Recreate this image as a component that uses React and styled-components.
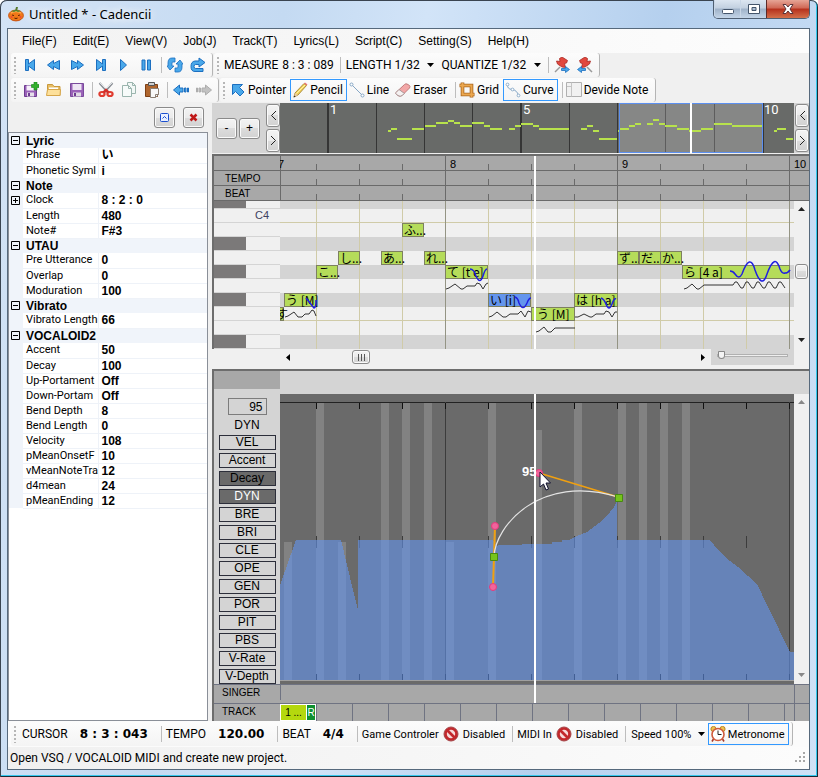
import styled, { createGlobalStyle, css } from "styled-components";
import { useState } from "react";

const menus = ["File(F)", "Edit(E)", "View(V)", "Job(J)", "Track(T)", "Lyrics(L)", "Script(C)", "Setting(S)", "Help(H)"];

const properties = [
  { name: "Lyric", items: [["Phrase", "い"], ["Phonetic Syml", "i"]] },
  { name: "Note", items: [["Clock", "8 : 2 : 0", true], ["Length", "480"], ["Note#", "F#3"]] },
  { name: "UTAU", items: [["Pre Utterance", "0"], ["Overlap", "0"], ["Moduration", "100"]] },
  { name: "Vibrato", items: [["Vibrato Length", "66"]] },
  {
    name: "VOCALOID2",
    items: [
      ["Accent", "50"],
      ["Decay", "100"],
      ["Up-Portament", "Off"],
      ["Down-Portam", "Off"],
      ["Bend Depth", "8"],
      ["Bend Length", "0"],
      ["Velocity", "108"],
      ["pMeanOnsetF", "10"],
      ["vMeanNoteTra", "12"],
      ["d4mean", "24"],
      ["pMeanEnding", "12"],
    ],
  },
];

const params = ["VEL", "Accent", "Decay", "DYN", "BRE", "BRI", "CLE", "OPE", "GEN", "POR", "PIT", "PBS", "V-Rate", "V-Depth"];

// x, y, width
const notes = [
  { x: -6, y: 106, w: 10, text: "す" },
  { x: 4, y: 92, w: 33, text: "う [M]" },
  { x: 36, y: 64, w: 22, text: "こ..." },
  { x: 58, y: 50, w: 22, text: "し..." },
  { x: 101, y: 50, w: 22, text: "あ..." },
  { x: 122, y: 22, w: 22, text: "ふ..." },
  { x: 144, y: 50, w: 22, text: "れ..." },
  { x: 165, y: 64, w: 43, text: "て [t e]" },
  { x: 208, y: 92, w: 43, text: "い [i]", selected: true },
  { x: 251, y: 106, w: 4, text: "" },
  { x: 255, y: 106, w: 40, text: "う [M]" },
  { x: 294, y: 92, w: 44, text: "は [h a]" },
  { x: 337, y: 50, w: 22, text: "ず..." },
  { x: 359, y: 50, w: 22, text: "だ..." },
  { x: 380, y: 50, w: 22, text: "か..." },
  { x: 402, y: 64, w: 108, text: "ら [4 a]" },
];

const keyRows = ["half", "C4", "white", "black", "white", "black", "white", "black", "white", "white", "black"];

const beats = [36, 79, 122, 165, 208, 251, 294, 337, 380, 423, 466, 509];
const measures = [165, 337, 509];

const overviewNotes = [
  [108, 27, 3], [111, 25, 6], [117, 35, 15], [132, 25, 12], [145, 22, 11], [156, 19, 12], [168, 17, 6],
  [174, 19, 6], [180, 22, 12], [192, 19, 12], [204, 22, 6], [210, 25, 12], [229, 25, 6], [235, 22, 6],
  [241, 20, 12], [253, 22, 6], [259, 25, 30], [301, 25, 6], [307, 22, 6], [313, 27, 6], [319, 35, 18],
  [338, 27, 2], [340, 25, 9], [349, 22, 6], [355, 20, 6], [367, 20, 6], [373, 16, 6], [379, 20, 6],
  [385, 22, 12], [397, 25, 12], [409, 27, 12], [421, 25, 12], [434, 20, 18], [452, 22, 30],
  [494, 27, 3], [497, 25, 9], [506, 35, 7],
];

// x, top, width of each velocity bar
const bars = [
  [4, 148, 8], [36, 9, 8], [58, 148, 8], [101, 9, 8], [122, 9, 8], [144, 9, 8], [166, 148, 8], [208, 9, 8],
  [254, 36, 8], [294, 9, 8], [338, 9, 8], [359, 9, 8], [380, 9, 8], [402, 9, 8],
];

export default function App() {
  return (
    <WindowStyle>
      <GlobalStyle />
      <TitleBar />
      <ClientStyle>
        <MenuStyle>
          {menus.map((menu) => (
            <MenuItemStyle key={menu}>{menu}</MenuItemStyle>
          ))}
        </MenuStyle>
        <Toolbars />
        <MainStyle>
          <PropertyPanel />
          <EditorStyle>
            <Overview />
            <PianoRoll />
            <CurveEditor />
          </EditorStyle>
        </MainStyle>
        <BottomBar />
        <StatusStyle>
          <span>Open VSQ / VOCALOID MIDI and create new project.</span>
          <svg width="12" height="12" fill="#a8a8a8">
            <path d="M8 0h2v2H8zM4 4h2v2H4zM8 4h2v2H8zM0 8h2v2H0zM4 8h2v2H4zM8 8h2v2H8z" />
          </svg>
        </StatusStyle>
      </ClientStyle>
    </WindowStyle>
  );
}

function TitleBar() {
  return (
    <TitleBarStyle>
      <svg width="16" height="16" viewBox="0 0 16 16">
        <ellipse cx="8" cy="9.5" rx="7.4" ry="5.4" fill="#f07818" stroke="#c8500c" />
        <path d="M3 7q5-3 10 0" stroke="#ffa94a" fill="none" strokeWidth="1.5" />
        <path d="M7 5l1-4 2 0-1 4z" fill="#567a2c" />
        <path d="M3 5l5-1 5 1-3 1-2-1-2 1z" fill="#4a8a30" />
        <path d="M4 9l2 .6M12 9l-2 .6M6.500 12q1.500 1 3 0" stroke="#6b2306" />
        <circle cx="3.500" cy="11" r="1" fill="#f04838" />
        <circle cx="12.500" cy="11" r="1" fill="#f04838" />
      </svg>
      <TitleStyle>Untitled * - Cadencii</TitleStyle>
      <WindowButtonsStyle>
        <WindowButtonStyle aria-label="Minimize">
          <svg width="14" height="12">
            <rect x="1.500" y="6.500" width="11" height="4" rx="1" fill="#fff" stroke="#44556b" />
          </svg>
        </WindowButtonStyle>
        <WindowButtonStyle aria-label="Maximize">
          <svg width="14" height="12">
            <path d="M1.500 1.500h11v9h-11zM5 4.500h4v3H5z" fill="#fff" fillRule="evenodd" stroke="#44556b" />
          </svg>
        </WindowButtonStyle>
        <WindowButtonStyle aria-label="Close" $close>
          <svg width="14" height="12" viewBox="0 0 14 12">
            <path d="M2 1.500h3l2 2.500 2-2.500h3L9 6l3 4.500H9L7 8l-2 2.500H2L5 6z" fill="#fff" stroke="#5b3338" />
          </svg>
        </WindowButtonStyle>
      </WindowButtonsStyle>
    </TitleBarStyle>
  );
}

const blue = { fill: "#49a8ea", stroke: "#1c6fc0", strokeWidth: 1, strokeLinejoin: "round" };

const icons = {
  first: <path {...blue} d="M2.500 2.500h3v4.500l6-4.500v11l-6-4.500v4.500h-3z" />,
  rewind: <path {...blue} d="M1.500 8l6-4.500v3l6-3v9l-6-3v3z" />,
  forward: <path {...blue} d="M14.500 8l-6-4.500v3l-6-3v9l6-3v3z" />,
  last: <path {...blue} d="M13.500 2.500h-3v4.500l-6-4.500v11l6-4.500v4.500h3z" />,
  play: <path {...blue} d="M5.500 2.500l6 5.500-6 5.500z" />,
  pause: <path {...blue} d="M4 3h3v10H4zM9.500 3h3v10h-3z" />,
  loop: (
    <g {...blue} strokeWidth=".8">
      <path d="M8 1H5Q1 1 1 6v3H0l3 4 4-4H5V6q0-1 1-1h2z" />
      <path d="M8 15h3q4 0 4-5V7h1l-3-4-4 4h2v3q0 1-1 1H8z" />
    </g>
  ),
  redo: <path {...blue} d="M9 1l6 4.500L9 10V7.500H5.500Q4 7.500 4 9.500t1.500 2H13v3H5Q1 14.500 1 9.500T5 4h4z" />,
  newFile: (
    <>
      <path d="M1.500 3.500h12v11h-12z" fill="#9a62b8" stroke="#6e3b90" />
      <path d="M3.500 3.500h8v5h-8z" fill="#f7f0fb" />
      <path d="M4 10.500h7v4H4z" fill="#e6e0ea" />
      <path d="M5 11h2v3H5z" fill="#6e3b90" />
      <path d="M11 0h3v2.500h2v3h-2V8h-3V5.500H8.500v-3H11z" fill="#33b02c" stroke="#16801a" strokeWidth=".6" />
    </>
  ),
  open: (
    <>
      <path d="M1.500 13.500v-11h5l1.500 2h6v9z" fill="#e9bf66" stroke="#c9993c" />
      <path d="M3 5.500h9v4H3z" fill="#fff" />
      <path d="M.5 13.500l1-6h13l-.5 6z" fill="#fde09a" stroke="#d6a64a" />
    </>
  ),
  save: (
    <>
      <path d="M1.500 1.500h13v13h-13z" fill="#9a62b8" stroke="#7a4a9c" />
      <path d="M3.500 2h9v6h-9z" fill="#eee6f4" />
      <path d="M4 10.500h8v4H4z" fill="#e0dce4" />
      <path d="M5 11h2v3H5z" fill="#6e3b90" />
    </>
  ),
  cut: (
    <>
      <path d="M1.500 1l8 9M14.500 1l-8 9" stroke="#8c9096" strokeWidth="2" />
      <path d="M2 1l6 6M14 1L8 7" stroke="#dfe2e6" />
      <ellipse cx="4" cy="12" rx="2.600" ry="2" fill="none" stroke="#e03c30" strokeWidth="2.200" />
      <ellipse cx="12" cy="12" rx="2.600" ry="2" fill="none" stroke="#e03c30" strokeWidth="2.200" />
      <path d="M5.500 10.500L8 8l2.500 2.500" stroke="#d32f2a" strokeWidth="2.500" fill="none" />
    </>
  ),
  copy: (
    <>
      <path d="M6.500.5h5l3 3v8h-8z" fill="#f2f8f6" stroke="#9bb5ae" />
      <path d="M1.500 3.500h6l3 3v8h-9z" fill="#f7fbfa" stroke="#9bb5ae" />
      <path d="M7.500 3.500v3h3M11.500.5v3h3" fill="none" stroke="#9bb5ae" />
    </>
  ),
  paste: (
    <>
      <path d="M1.500 2.500h12v12h-12z" fill="#b0662e" stroke="#7d3f14" />
      <path d="M4.500.5h6v3h-6z" fill="#cfcfcf" stroke="#555" />
      <path d="M6.500 6.500h8v6l-3 3h-5z" fill="#f8f8f8" stroke="#8b7e74" />
      <path d="M11.500 15.500v-3h3" fill="none" stroke="#8b7e74" />
    </>
  ),
  undo: <path {...blue} d="M.5 8L6.500 3v3h3.500v4H6.500v3zM11.500 6h1.500v4h-1.500zM14.500 6h1v4h-1z" />,
  redoOff: <path fill="#c2c2c2" stroke="#adadad" d="M15.500 8L9.500 3v3H6v4h3.500v3zM3 6h1.500v4H3zM.5 6h1v4h-1z" />,
  pointer: <path {...blue} d="M2.500 2.500h10L9.500 5.500l4.500 4.500-4 4-4.500-4.500-3 3z" />,
  pencil: (
    <>
      <path d="M2 15l1-4L12 1.500l2.500 2L6 13z" fill="#f3d25a" stroke="#9b7a24" strokeWidth=".8" />
      <path d="M12 1.500l1-1 2.500 2-1 1z" fill="#e87474" />
      <path d="M2 15l1-4 3 2z" fill="#e8c9a0" />
      <path d="M1.500 15.500l.8-2 1.200 1z" fill="#222" />
      <path d="M4.500 11.500L13 3" stroke="#fff3a8" />
    </>
  ),
  line: (
    <>
      <path d="M2.500 2.500l11 11" stroke="#86a7c6" />
      <circle cx="2.500" cy="2.500" r="1.500" fill="#fff" stroke="#86a7c6" />
      <circle cx="13.500" cy="13.500" r="1.500" fill="#fff" stroke="#86a7c6" />
    </>
  ),
  eraser: (
    <>
      <path d="M1 10.500l8.500-8q1-1 2.500-.5l2.500 1.500q1 1 0 2.500L7 13.500q-1.500 1-3 .5l-2.500-1.500q-1-1-.5-2z" fill="#f2a7a7" stroke="#c07b7b" />
      <path d="M1 10.500l3-3 5.500 4L7 13.500q-1.500 1-3 .5l-2.500-1.500q-1-1-.5-2z" fill="#f5f1f1" stroke="#a99" />
    </>
  ),
  grid: (
    <>
      <path d="M.5 3.500h12v12M3.500.5v12h12" stroke="#a8651d" strokeWidth="3.600" fill="none" />
      <path d="M1 3.500h11.500V15M3.500 1v11.500H15" stroke="#eba74f" strokeWidth="2" fill="none" />
    </>
  ),
  curve: (
    <>
      <path d="M2.500 2.500Q2 7 7 7.500T13.500 13.500" stroke="#86a7c6" fill="none" />
      <g fill="#fff" stroke="#86a7c6" strokeWidth=".9">
        <circle cx="2.500" cy="2.500" r="1.400" />
        <circle cx="7.500" cy="7.500" r="1.400" />
        <circle cx="13.500" cy="13.500" r="1.400" />
      </g>
    </>
  ),
  divide: (
    <>
      <path d="M.5.5h15v14H.5z" fill="#f1f1f1" stroke="#b0b0b0" />
      <path d="M5.500.5v14M1 4.500h4" stroke="#c4c4c4" />
    </>
  ),
  pinStart: (
    <>
      <path d="M1 15l5-5" stroke="#999" strokeWidth="1.500" />
      <path d="M5.500 1.500L8 0l5.500 3.500-1 2.500-2 .5 1 4-3.500-.5-4.500-3-1-3 3.500.5z" fill="#e2483e" stroke="#a82a24" strokeWidth=".8" />
      <path {...blue} strokeWidth=".8" d="M7.500 11.500h4v-2l4 3-4 3v-2h-4z" />
    </>
  ),
  pinEnd: (
    <>
      <path d="M15 15l-5-5" stroke="#999" strokeWidth="1.500" />
      <path d="M10.500 1.500L8 0 2.500 3.500l1 2.500 2 .5-1 4 3.500-.5 4.500-3 1-3-3.500.5z" fill="#e2483e" stroke="#a82a24" strokeWidth=".8" />
      <path {...blue} strokeWidth=".8" d="M8.500 11.500h-4v-2l-4 3 4 3v-2h4z" />
    </>
  ),
  disabled: (
    <>
      <circle cx="8" cy="8" r="5.500" fill="#f6dada" stroke="#c3282c" strokeWidth="2.600" />
      <circle cx="8" cy="8" r="7" fill="none" stroke="#8f1c20" strokeWidth=".8" />
      <path d="M4 4l8 8" stroke="#c3282c" strokeWidth="2.600" />
    </>
  ),
  clock: (
    <>
      <path d="M3.500 13L2 15.500M12.500 13l1.500 2.500" stroke="#a63a2a" strokeWidth="1.600" />
      <circle cx="3.500" cy="3" r="2.600" fill="#f0c24c" stroke="#b5862a" />
      <circle cx="12.500" cy="3" r="2.600" fill="#f0c24c" stroke="#b5862a" />
      <circle cx="8" cy="8.500" r="6" fill="#fff" stroke="#d05a3c" strokeWidth="1.600" />
      <path d="M8 4.500v4h3.500" stroke="#222" fill="none" />
    </>
  ),
};

function Icon({ name }) {
  return (
    <svg width="16" height="16" viewBox="0 0 16 16" fill="none" aria-hidden="true">
      {icons[name]}
    </svg>
  );
}

function IconButtons({ names }) {
  return names.map((name) => (
    <IconButtonStyle key={name} aria-label={name}>
      <Icon name={name} />
    </IconButtonStyle>
  ));
}

function Combo({ id, label, options }) {
  return (
    <ComboStyle>
      <label htmlFor={id}>{label}</label>
      <SelectStyle id={id}>
        {options.map((option) => (
          <option key={option}>{option}</option>
        ))}
      </SelectStyle>
      <svg width="7" height="4">
        <path d="M0 0h7L3.500 4z" />
      </svg>
    </ComboStyle>
  );
}

function Tool({ icon, label, checked }) {
  return (
    <ToolStyle $checked={checked}>
      <Icon name={icon} />
      {label}
    </ToolStyle>
  );
}

function Toolbars() {
  const lengths = ["1/32", "1/16", "1/8", "1/4"];
  return (
    <>
      <ToolRowStyle>
        <ToolbarStyle>
          <GripStyle />
          <IconButtons names={["first", "rewind", "forward", "last", "play", "pause"]} />
          <SeparatorStyle />
          <IconButtons names={["loop", "redo"]} />
        </ToolbarStyle>
        <ToolbarStyle>
          <GripStyle />
          <ReadoutStyle>MEASURE</ReadoutStyle>
          <ReadoutStyle>8 : 3 : 089</ReadoutStyle>
          <SeparatorStyle />
          <Combo id="length" label="LENGTH" options={lengths} />
          <Combo id="quantize" label="QUANTIZE" options={lengths} />
          <SeparatorStyle />
          <IconButtons names={["pinStart", "pinEnd"]} />
        </ToolbarStyle>
      </ToolRowStyle>
      <ToolRowStyle>
        <ToolbarStyle>
          <GripStyle />
          <IconButtons names={["newFile", "open", "save"]} />
          <SeparatorStyle />
          <IconButtons names={["cut", "copy", "paste"]} />
          <SeparatorStyle />
          <IconButtons names={["undo", "redoOff"]} />
        </ToolbarStyle>
        <ToolbarStyle>
          <GripStyle />
          <Tool icon="pointer" label="Pointer" />
          <Tool icon="pencil" label="Pencil" checked />
          <Tool icon="line" label="Line" />
          <Tool icon="eraser" label="Eraser" />
          <SeparatorStyle />
          <Tool icon="grid" label="Grid" />
          <Tool icon="curve" label="Curve" checked />
          <SeparatorStyle />
          <Tool icon="divide" label="Devide Note" />
        </ToolbarStyle>
      </ToolRowStyle>
    </>
  );
}

function PropertyPanel() {
  return (
    <PanelStyle>
      <PanelButtonsStyle>
        <PanelButtonStyle aria-label="Detach">
          <svg width="11" height="11" fill="none" stroke="#1a4fd0">
            <rect x="1.500" y="1.500" width="8" height="8" rx="1" fill="#e9f0ff" />
            <path d="M3.500 6.500l2-2 2 2" />
          </svg>
        </PanelButtonStyle>
        <PanelButtonStyle aria-label="Close">
          <svg width="9" height="9">
            <path d="M1.500 1.500l6 6M7.500 1.500l-6 6" stroke="#c01818" strokeWidth="2.500" />
          </svg>
        </PanelButtonStyle>
      </PanelButtonsStyle>
      <GridFrameStyle>
        <GridStyle>
          <colgroup>
            <col width="14" />
            <col width="75" />
            <col />
          </colgroup>
          {properties.map((group) => (
            <tbody key={group.name}>
              <GroupRowStyle>
                <td>
                  <Expander />
                </td>
                <th colSpan="2">{group.name}</th>
              </GroupRowStyle>
              {group.items.map(([name, value, nested]) => (
                <ItemRowStyle key={name}>
                  <td>{nested && <Expander closed />}</td>
                  <td>{name}</td>
                  <td>{value}</td>
                </ItemRowStyle>
              ))}
            </tbody>
          ))}
        </GridStyle>
      </GridFrameStyle>
    </PanelStyle>
  );
}

function Expander({ closed }) {
  return (
    <ExpanderStyle aria-label={closed ? "Expand" : "Collapse"}>
      <svg width="9" height="9" fill="none" stroke="#000">
        <path d={closed ? "M.5.5h8v8h-8zM2 4.500h5M4.500 2v5" : "M.5.5h8v8h-8zM2 4.500h5"} />
      </svg>
    </ExpanderStyle>
  );
}

function Chevron({ right }) {
  return (
    <svg width="7" height="11" fill="none" stroke="#222">
      <path d={right ? "M1 1l4.500 4.500L1 10" : "M6 1L1.500 5.500 6 10"} />
    </svg>
  );
}

function Overview() {
  return (
    <OverviewStyle>
      <ZoomButtonsStyle>
        <ZoomButtonStyle>-</ZoomButtonStyle>
        <ZoomButtonStyle>+</ZoomButtonStyle>
        <PagerStyle>
          <PageButtonStyle aria-label="Previous"><Chevron /></PageButtonStyle>
          <PageButtonStyle aria-label="Next"><Chevron right /></PageButtonStyle>
        </PagerStyle>
      </ZoomButtonsStyle>
      <OverviewCanvasStyle>
        <svg width="100%" height="100%" shapeRendering="crispEdges">
          {[96, 144, 192, 289, 337, 385, 434].map((x) => (
            <rect key={x} x={x} width="1" height="50" fill="#353535" />
          ))}
          {[47, 240, 482].map((x) => (
            <rect key={x} x={x} width="2" height="50" fill="#353535" />
          ))}
          <rect x="339" y="0" width="143" height="49" fill="#fff" fillOpacity=".2" />
          {overviewNotes.map(([x, y, w]) => (
            <rect key={x} x={x} y={y} width={w} height="2" fill="#b8e24c" />
          ))}
          <path d="M339.500.5h143v49h-143z" fill="none" stroke="#5b8ff0" />
          <rect x="410" width="2" height="50" fill="#fff" />
        </svg>
        <OverviewLabelStyle $x={50}>1</OverviewLabelStyle>
        <OverviewLabelStyle $x={243}>5</OverviewLabelStyle>
        <OverviewLabelStyle $x={484}>10</OverviewLabelStyle>
      </OverviewCanvasStyle>
      <PagerStyle>
        <PageButtonStyle aria-label="Previous"><Chevron /></PageButtonStyle>
        <PageButtonStyle aria-label="Next"><Chevron right /></PageButtonStyle>
      </PagerStyle>
    </OverviewStyle>
  );
}

function Ruler({ label, numbers }) {
  return (
    <RulerStyle>
      <RulerLabelStyle>{label}</RulerLabelStyle>
      <RulerTrackStyle>
        <svg width="100%" height="14" shapeRendering="crispEdges" fill="#6a6a6a">
          {beats.map((x) => (
            <rect key={x} x={x} y={measures.includes(x) ? 0 : 8} width="1" height="14" />
          ))}
        </svg>
        {numbers && numbers.map(([x, text]) => <RulerNumberStyle key={x} $x={x}>{text}</RulerNumberStyle>)}
      </RulerTrackStyle>
    </RulerStyle>
  );
}

function PianoRoll() {
  return (
    <RollStyle>
      <PlayheadStyle $bottom={16} />
      <Ruler numbers={[[-2, "7"], [170, "8"], [342, "9"], [514, "10"]]} />
      <Ruler label="TEMPO" />
      <Ruler label="BEAT" />
      <RollBodyStyle>
        <KeysStyle>
          {keyRows.map((row, i) => (
            <KeyStyle key={i} $black={row === "black" || row === "half"} $half={row === "half"}>
              {row === "C4" && row}
            </KeyStyle>
          ))}
        </KeysStyle>
        <RollCanvasStyle>
          {keyRows.map((row, i) => (
            <LaneStyle key={i} $black={row === "black" || row === "half"} $half={row === "half"} $line={i === 1 || i === 8} />
          ))}
          <LayerStyle>
            <svg width="100%" height="100%" shapeRendering="crispEdges">
              {beats.map((x) => (
                <rect key={x} x={x} width="1" height="148" fill={measures.includes(x) ? "#949484" : "#d0cba8"} />
              ))}
            </svg>
          </LayerStyle>
          {notes.map((note) => (
            <NoteStyle key={note.x} $x={note.x} $y={note.y} $w={note.w} $selected={note.selected}>
              {note.text}
            </NoteStyle>
          ))}
          <LayerStyle>
            <svg width="100%" height="100%" fill="none">
              <g stroke="#333">
                <path d="M5 116l3-1 6-4 4 5h4l3-3h4l3-4 2 1 2 5" />
                <path d="M166 88l3-1 6-4 6 5h2l4-3h8l2-3 3 1 3 5 3-5 2-1" />
                <path d="M209 116l3-1 5-4 6 5h3l4-3h8l3-3 4 6 3-6 3 1" />
                <path d="M256 131l3-1 5-4 4 5h3l4-4h20" />
                <path d="M295 116l3 0 6-3 6 3h2l4-3h8l2-3 3 1 3 5 3-5h2" />
                <path d="M404 88l3-1 5-4 5 5h2l5-4h29l2-3h2l4 6h2l3-6h2l4 6h2l3-6h2l4 6h2l3-6h2l4 6h2l3-6h2l4 6" />
              </g>
              <g stroke="#2020e0" strokeWidth="1.500">
                <path d="M26 97l4 5 4 5q2 0 2-8" />
                <path d="M190 68q4 0 6 7 4 9 7 0 2-7 4-7" />
                <path d="M235 96q3 1 4 6 4 9 8 0 2-5 4-5" />
                <path d="M321 97q3 1 5 6 3 8 6 0 2-6 4-5" />
                <path d="M450 70q3 0 5 3 4 6 7 0 8-22 13-4 7 20 12 4 8-22 13-5 2 5 5 4 3 0 5-3" />
              </g>
            </svg>
          </LayerStyle>
        </RollCanvasStyle>
        <VScroll thumb />
      </RollBodyStyle>
      <ScrollRowStyle>
        <HScrollStyle>
          <ArrowButtonStyle aria-label="Scroll left">
            <svg width="5" height="7"><path d="M5 0v7L1 3.500z" /></svg>
          </ArrowButtonStyle>
          <HThumbStyle>
            <svg width="9" height="7" stroke="#555"><path d="M1.500 0v7M4.500 0v7M7.500 0v7" /></svg>
          </HThumbStyle>
          <SpacerStyle />
          <ArrowButtonStyle aria-label="Scroll right">
            <svg width="5" height="7"><path d="M0 0v7l4-3.500z" /></svg>
          </ArrowButtonStyle>
        </HScrollStyle>
        <ZoomBoxStyle>
          <SliderStyle type="range" aria-label="Zoom" defaultValue="0" />
        </ZoomBoxStyle>
      </ScrollRowStyle>
    </RollStyle>
  );
}

function VScroll({ thumb }) {
  return (
    <VScrollStyle>
      <ArrowButtonStyle aria-label="Scroll up">
        <svg width="7" height="5" fill={thumb ? "#222" : "#888"}><path d="M0 4h7L3.500 0z" /></svg>
      </ArrowButtonStyle>
      {thumb && <VThumbStyle />}
      <ArrowButtonStyle aria-label="Scroll down">
        <svg width="7" height="5" fill={thumb ? "#222" : "#888"}><path d="M0 0h7L3.500 4z" /></svg>
      </ArrowButtonStyle>
    </VScrollStyle>
  );
}

function CurveEditor() {
  const [level, setLevel] = useState("95");
  return (
    <CurveEditorStyle>
      <CurveHeaderStyle><span /></CurveHeaderStyle>
      <CurveBodyStyle>
        <ParamsStyle>
          <LevelStyle id="level" value={level} onChange={(e) => setLevel(e.target.value)} />
          <LevelLabelStyle htmlFor="level">DYN</LevelLabelStyle>
          {params.map((param) => (
            <ParamStyle key={param} $active={param === "DYN"} $dim={param === "Decay"}>
              {param}
            </ParamStyle>
          ))}
        </ParamsStyle>
        <CurveCanvasStyle>
          <svg width="100%" height="100%">
            <g shapeRendering="crispEdges">
              {bars.map(([x, y, w]) => (
                <rect key={x} x={x} y={y} width={w} height={286 - y} fill="#828282" />
              ))}
              <rect y="8" width="100%" height="1" fill="#222" />
              {[165, 509].map((x) => (
                <rect key={x} x={x} y="8" width="1" height="278" fill="#3c3c3c" />
              ))}
              {beats.map((x) => (
                <g key={x} fill="#111">
                  <rect x={x} y="9" width="1" height="6" />
                  <rect x={x} y="142" width="1" height="12" fill="#3c3c3c" />
                  <rect x={x} y="280" width="1" height="6" />
                </g>
              ))}
              <path
                d="M0 191L16 146H61L73 196 78 216V146H213L218 153V151H242V150H272L272 148H282V146H289L297 142 307 138 315 132 323 126 330 118 334 113 337 107V146H430L438 156 450 167 458 173 477 190 488 213 510 258H514V286H0z"
                fill="#6495ed"
                fillOpacity=".6"
              />
              <rect y="286" width="100%" height="1" fill="#a0a0a0" />
            </g>
            <path d="M215 132L214 163M214 163L213 193" stroke="#f0a010" strokeWidth="2" />
            <path d="M259 79L338 103" stroke="#f0a010" strokeWidth="1.500" />
            <path d="M214 163C215 132 260 79 338 103" fill="none" stroke="#e4e4e4" strokeWidth="1.200" />
            <g fill="#f0649c" stroke="#e8387c">
              <circle cx="215" cy="132" r="3.500" />
              <circle cx="213" cy="193" r="3.500" />
              <circle cx="259" cy="79" r="3.500" />
            </g>
            <path d="M210.500 159.500h7v7h-7zM335.500 100.500h7v7h-7z" fill="#76c41c" stroke="#478a10" />
          </svg>
          <CursorStyle width="13" height="20" viewBox="0 0 13 20">
            <path d="M1 1v15l3.500-3 2.500 6 2.500-1L7 12h4.500z" fill="#fff" stroke="#111130" />
          </CursorStyle>
          <PointerValueStyle>95</PointerValueStyle>
        </CurveCanvasStyle>
        <VScroll />
      </CurveBodyStyle>
      <LaneRowStyle>
        <LaneLabelStyle>SINGER</LaneLabelStyle>
        <SingerLaneStyle />
        <LaneEndStyle />
      </LaneRowStyle>
      <PlayheadStyle $top={23} $bottom={18} />
      <LaneRowStyle $last>
        <LaneLabelStyle>TRACK</LaneLabelStyle>
        <TrackLaneStyle>
          <TrackTabStyle>
            <span>1 ...</span>
            <b>R</b>
          </TrackTabStyle>
          {Array.from({ length: 14 }, (_, i) => (
            <TrackCellStyle key={i} />
          ))}
        </TrackLaneStyle>
        <LaneEndStyle />
      </LaneRowStyle>
    </CurveEditorStyle>
  );
}

function BottomBar() {
  return (
    <BottomBarStyle>
      <ToolbarStyle $small>
        <GripStyle />
        <CounterStyle>CURSOR <b>8 : 3 : 043</b></CounterStyle>
        <SeparatorStyle />
        <CounterStyle>TEMPO <b>120.00</b></CounterStyle>
        <SeparatorStyle />
        <CounterStyle>BEAT <b>4/4</b></CounterStyle>
        <SeparatorStyle />
        <DeviceStyle>Game Controler <Icon name="disabled" />Disabled</DeviceStyle>
        <SeparatorStyle />
        <DeviceStyle>MIDI In <Icon name="disabled" />Disabled</DeviceStyle>
        <SeparatorStyle />
        <Combo id="speed" label="Speed" options={["100%", "50%"]} />
        <Tool icon="clock" label="Metronome" checked />
      </ToolbarStyle>
    </BottomBarStyle>
  );
}

const GlobalStyle = createGlobalStyle`
  * {
    box-sizing: border-box;
  }

  body {
    margin: 0;
    font-family: "Liberation Sans", "Noto Sans CJK JP", sans-serif;
    font-size: 12px;
    color: #000;
  }

  button, input, select {
    font: inherit;
    color: inherit;
    margin: 0;
    padding: 0;
  }

  svg {
    display: block;
    flex: none;
  }
`;

const center = css`
  display: flex;
  align-items: center;
  justify-content: center;
`;

const WindowStyle = styled.div`
  min-height: 100vh;
  display: flex;
  flex-direction: column;
  padding: 0 8px 7px 7px;
  border-radius: 7px 7px 0 0;
  background: linear-gradient(100deg, #d3e3f5 0%, #c4daf2 30%, #d2e4f8 45%, #b5d0ee 70%, #cfe2f7 100%);
  box-shadow: inset 0 1px #3a4450, inset 1px 0 #3a4450, inset -1px -1px #1b2a35, inset -2px -2px #35c8ee;
`;

const TitleBarStyle = styled.header`
  height: 28px;
  display: flex;
  align-items: center;
  padding-left: 1px;
  gap: 5px;
`;

const TitleStyle = styled.h1`
  flex: 1;
  margin: 0;
  font-family: "Noto Sans", sans-serif;
  font-size: 13px;
  font-weight: 400;
  text-shadow: 0 0 8px #fff, 0 0 8px #fff;
`;

const WindowButtonsStyle = styled.div`
  align-self: flex-start;
  display: flex;
  border: 1px solid #4f5f72;
  border-top: 0;
  border-radius: 0 0 5px 5px;
  overflow: hidden;
`;

const WindowButtonStyle = styled.button`
  ${center}
  width: ${({ $close }) => ($close ? 43 : 26)}px;
  height: 18px;
  border: 0;
  border-left: ${({ $close }) => ($close ? "1px solid #5c2a28" : "1px solid #c8d6e6")};
  background: ${({ $close }) =>
    $close
      ? "linear-gradient(#e6a596, #cf6754 45%, #b5301c 50%, #d4704a)"
      : "linear-gradient(#dce6f1, #c2d0e0 45%, #9fb2c8 50%, #c4d5e8)"};
`;

const ClientStyle = styled.main`
  flex: 1;
  display: flex;
  flex-direction: column;
  border: 1px solid #56697c;
  background: #f0f0f0;
  overflow: hidden;
`;

const MenuStyle = styled.nav`
  height: 24px;
  display: flex;
  padding-left: 6px;
  background: linear-gradient(90deg, #f2f2f2, #fdfdfd);
`;

const MenuItemStyle = styled.button`
  border: 0;
  padding: 0 8px;
  background: none;
`;

const ToolRowStyle = styled.div`
  height: 25px;
  display: flex;
  gap: 1px;
  padding: 0 3px 1px;
`;

const ToolbarStyle = styled.div`
  display: flex;
  align-items: center;
  padding-right: 3px;
  border-right: 1px solid #b4b4b4;
  border-radius: 3px;
  background: linear-gradient(#fcfcfc, #f4f4f4);
  font-family: Roboto, sans-serif;
  font-size: ${({ $small }) => ($small ? 11 : 12)}px;
  white-space: nowrap;
`;

const GripStyle = styled.span`
  width: 2px;
  height: 17px;
  margin: 0 3px;
  background: repeating-linear-gradient(#b6b6b6 0 2px, transparent 2px 4px);
`;

const IconButtonStyle = styled.button`
  ${center}
  width: 23px;
  height: 22px;
  border: 0;
  background: none;
`;

const SeparatorStyle = styled.span`
  width: 1px;
  height: 16px;
  margin: 0 1px 0 4px;
  background: #bdbdbd;
`;

const ReadoutStyle = styled.span`
  padding: 0 2px;
`;

const ComboStyle = styled.span`
  display: flex;
  align-items: center;
  padding: 0 3px 0 4px;
`;

const SelectStyle = styled.select`
  appearance: none;
  width: 33px;
  margin-left: 3px;
  border: 0;
  background: none;
`;

const ToolStyle = styled.button`
  height: 22px;
  display: flex;
  align-items: center;
  gap: 2px;
  padding: 0 3px 0 1px;
  border: 1px solid ${({ $checked }) => ($checked ? "#3399ff" : "transparent")};
  background: none;
`;

const MainStyle = styled.div`
  flex: 1;
  display: flex;
  gap: 4px;
`;

const PanelStyle = styled.aside`
  width: 200px;
  display: flex;
  flex-direction: column;
`;

const PanelButtonsStyle = styled.div`
  display: flex;
  justify-content: flex-end;
  gap: 8px;
  padding: 4px 4px 4px 0;
`;

const raised = css`
  ${center}
  border: 1px solid #8a8a8a;
  border-radius: 3px;
  box-shadow: inset 0 0 0 1px #fafafa;
  background: linear-gradient(#f3f3f3, #ebebeb 50%, #dcdcdc 50%, #d2d2d2);
`;

const PanelButtonStyle = styled.button`
  ${raised}
  width: 21px;
  height: 21px;
`;

const GridFrameStyle = styled.div`
  flex: 1;
  border: 1px solid #8a8f98;
  background: #fff;
`;

const GridStyle = styled.table`
  width: 100%;
  table-layout: fixed;
  border-collapse: collapse;

  td, th {
    height: 15px;
    padding: 0 0 0 3px;
    line-height: 14px;
    text-align: left;
    white-space: nowrap;
    overflow: hidden;
  }

  td:first-child {
    padding-left: 2px;
    background: #f0f4fa;
  }
`;

const GroupRowStyle = styled.tr`
  background: #f0f4fa;
`;

const ItemRowStyle = styled.tr`
  td + td {
    border-bottom: 1px solid #eef2f8;
    font-family: Roboto, sans-serif;
    font-size: 11px;
  }

  td:last-child {
    border-left: 1px solid #eef2f8;
    font-family: "Liberation Sans", "Noto Sans CJK JP", sans-serif;
    font-size: 12px;
    font-weight: 700;
  }
`;

const ExpanderStyle = styled.button`
  display: block;
  border: 0;
  background: none;
`;

const EditorStyle = styled.section`
  flex: 1;
  min-width: 0;
  display: flex;
  flex-direction: column;
`;

const OverviewStyle = styled.div`
  height: 50px;
  display: flex;
  margin-bottom: 1px;
  background: #d4d4d4;
`;

const ZoomButtonsStyle = styled.div`
  width: 68px;
  display: flex;
  align-items: center;
  padding-left: 4px;
  gap: 2px;
`;

const ZoomButtonStyle = styled.button`
  ${raised}
  width: 21px;
  height: 21px;
`;

const PagerStyle = styled.div`
  width: 15px;
  display: flex;
  flex-direction: column;
  gap: 2px;
  padding: 1px 0 1px 1px;
  height: 50px;

  ${ZoomButtonsStyle} & {
    margin-left: auto;
  }
`;

const PageButtonStyle = styled.button`
  ${raised}
  flex: 1;
  width: 14px;
`;

const OverviewCanvasStyle = styled.div`
  flex: 1;
  position: relative;
  background: #686a68;
  overflow: hidden;
`;

const OverviewLabelStyle = styled.span`
  position: absolute;
  top: 0;
  left: ${({ $x }) => $x}px;
  color: #fff;
  font-family: Roboto, sans-serif;
  font-size: 13px;
  line-height: 14px;
`;

const RollStyle = styled.div`
  position: relative;
  border-top: 2px solid #6d6d6d;
  border-left: 2px solid #6d6d6d;
`;

const PlayheadStyle = styled.i`
  position: absolute;
  z-index: 1;
  top: ${({ $top = 0 }) => $top}px;
  bottom: ${({ $bottom }) => $bottom}px;
  left: 320px;
  width: 2px;
  background: #fff;
`;

const RulerStyle = styled.div`
  height: 15px;
  display: flex;
  border-bottom: 1px solid #6a6a6a;
  background: #a8a8a8;
`;

const RulerLabelStyle = styled.span`
  width: 66px;
  padding-left: 11px;
  font-size: 10px;
  line-height: 15px;
`;

const RulerTrackStyle = styled.div`
  flex: 1;
  position: relative;
  box-shadow: inset 1px 0 #6a6a6a;
  overflow: hidden;
`;

const RulerNumberStyle = styled.span`
  position: absolute;
  top: 1px;
  left: ${({ $x }) => $x}px;
  font-size: 11px;
  line-height: 14px;
`;

const RollBodyStyle = styled.div`
  display: flex;
`;

const KeysStyle = styled.div`
  width: 66px;
`;

const KeyStyle = styled.div`
  height: ${({ $half }) => ($half ? 8 : 14)}px;
  padding-left: 41px;
  border-bottom: 1px solid #d4d4d4;
  background: ${({ $black }) => ($black ? "linear-gradient(90deg, #7b7979 32px, #f0f0f0 32px)" : "#f0f0f0")};
  color: #3f4260;
  font-size: 11px;
  line-height: 13px;
`;

const RollCanvasStyle = styled.div`
  flex: 1;
  position: relative;
  overflow: hidden;
`;

const LaneStyle = styled.div`
  height: ${({ $half }) => ($half ? 8 : 14)}px;
  background: ${({ $black }) => ($black ? "#d4d4d4" : "#f0f0f0")};
  border-bottom: ${({ $line }) => ($line ? "1px solid #d0cba8" : 0)};
`;

const LayerStyle = styled.div`
  position: absolute;
  inset: 0;
`;

const NoteStyle = styled.div`
  position: absolute;
  left: ${({ $x }) => $x}px;
  top: ${({ $y }) => $y}px;
  width: ${({ $w }) => $w}px;
  height: 14px;
  padding-left: 1px;
  border: 1px solid #7d8060;
  background: ${({ $selected }) => ($selected ? "#6495ed" : "#b5dc5a")};
  font-family: "Noto Sans CJK JP", sans-serif;
  line-height: 11px;
  white-space: nowrap;
`;

const VScrollStyle = styled.div`
  width: 15px;
  display: flex;
  flex-direction: column;
  align-items: center;
  justify-content: space-between;
  background: #f0f0f0;
`;

const ArrowButtonStyle = styled.button`
  ${center}
  width: 15px;
  height: 17px;
  border: 0;
  background: none;
`;

const VThumbStyle = styled.span`
  ${raised}
  width: 13px;
  height: 15px;
  margin-bottom: 8px;
`;

const ScrollRowStyle = styled.div`
  height: 16px;
  display: flex;
  margin-left: -2px;
  padding: 0 15px 0 68px;
  background: #f0f0f0;
`;

const HScrollStyle = styled.div`
  flex: 1;
  display: flex;
  align-items: center;
`;

const HThumbStyle = styled.span`
  ${raised}
  width: 18px;
  height: 14px;
  margin-left: 57px;
`;

const SpacerStyle = styled.span`
  flex: 1;
`;

const ZoomBoxStyle = styled.div`
  width: 83px;
  padding: 0 6px;
  background: #d4d4d4;
`;

const SliderStyle = styled.input`
  appearance: none;
  display: block;
  width: 100%;
  height: 12px;
  background: none;

  &::-webkit-slider-runnable-track {
    height: 3px;
    border: 1px solid #b0b0b0;
    background: #eee;
  }

  &::-webkit-slider-thumb {
    appearance: none;
    width: 7px;
    height: 8px;
    margin-top: -4px;
    border: 1px solid #888;
    border-radius: 1px 1px 4px 4px;
    background: #f4f4f4;
  }
`;

const CurveEditorStyle = styled.div`
  flex: 1;
  position: relative;
  display: flex;
  flex-direction: column;
  margin-top: 4px;
  border-top: 2px solid #6d6d6d;
  border-left: 2px solid #6d6d6d;
`;

const CurveHeaderStyle = styled.div`
  height: 23px;
  background: #d4d4d4;

  span {
    display: block;
    width: 66px;
    height: 18px;
    background: #a8a8a8;
  }
`;

const CurveBodyStyle = styled.div`
  flex: 1;
  display: flex;
`;

const ParamsStyle = styled.div`
  width: 66px;
  display: flex;
  flex-direction: column;
  align-items: center;
  gap: 3px;
  padding: 4px 0 0;
  background: #d4d4d4;
`;

const LevelStyle = styled.input`
  width: 39px;
  height: 17px;
  padding-right: 3px;
  border: 1px solid #7c7c7c;
  background: none;
  text-align: right;
`;

const LevelLabelStyle = styled.label`
  line-height: 14px;
`;

const ParamStyle = styled.button`
  width: 57px;
  height: 15px;
  border: 1px solid #2c2e3a;
  background: ${({ $active, $dim }) => ($active || $dim ? "#6a6a6a" : "#d4d4d4")};
  color: ${({ $active }) => ($active ? "#fff" : "#000")};
  line-height: 13px;
`;

const CurveCanvasStyle = styled.div`
  flex: 1;
  position: relative;
  background: #6a6a6a;

  > svg:first-child {
    position: absolute;
  }
`;

const PointerValueStyle = styled.b`
  position: absolute;
  z-index: 2;
  left: 242px;
  top: 70px;
  color: #fff;
  font-size: 13px;
`;

const CursorStyle = styled.svg`
  position: absolute;
  z-index: 2;
  left: 259px;
  top: 77px;
`;

const LaneRowStyle = styled.div`
  height: ${({ $last }) => ($last ? 18 : 19)}px;
  display: flex;
  border-top: 1px solid #6f7382;
  background: #a8a8a8;
`;

const LaneLabelStyle = styled.span`
  width: 66px;
  padding-left: 8px;
  font-size: 10px;
  line-height: 16px;
`;

const SingerLaneStyle = styled.div`
  flex: 1;
  height: 15px;
  border-left: 1px solid #6f7382;
`;

const TrackLaneStyle = styled.div`
  flex: 1;
  display: flex;
  overflow: hidden;
`;

const TrackTabStyle = styled.button`
  flex: none;
  width: 36px;
  display: flex;
  border: 1px solid #fff;
  background: #b4d80e;
  font-size: 10px;
  line-height: 15px;

  span {
    flex: 1;
  }

  b {
    width: 9px;
    border-left: 1px solid #fff;
    background: #0f9030;
    color: #fff;
    font-weight: 400;
  }
`;

const TrackCellStyle = styled.div`
  flex: none;
  width: 36px;
  border-left: 1px solid #6f7382;
`;

const LaneEndStyle = styled.span`
  width: 15px;
  border-left: 1px solid #6f7382;
`;

const BottomBarStyle = styled.div`
  height: 26px;
  display: flex;
  padding: 1px 3px;
  background: #fbfbfb;
`;

const CounterStyle = styled.span`
  padding: 0 9px 0 3px;
  font-size: 12px;

  b {
    margin: 0 0 0 9px;
    font-family: "DejaVu Sans", sans-serif;
  }
`;

const DeviceStyle = styled.span`
  display: flex;
  align-items: center;
  gap: 4px;
  padding: 0 3px;
`;

const StatusStyle = styled.footer`
  height: 22px;
  display: flex;
  align-items: center;
  justify-content: space-between;
  padding: 0 2px;
  background: linear-gradient(90deg, #f0f0f0, #fcfcfc);
  font-family: Roboto, sans-serif;
`;
